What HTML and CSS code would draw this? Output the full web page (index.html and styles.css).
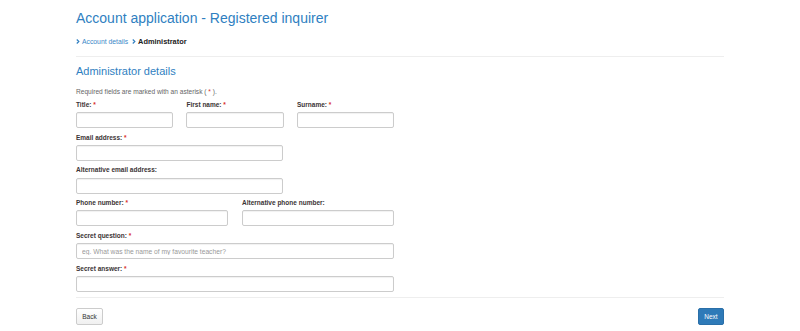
FILE: index.html
```html
<!DOCTYPE html>
<html lang="en">
<head>
<meta charset="utf-8">
<title>Account application - Registered inquirer</title>
<link rel="stylesheet" href="styles.css">
</head>
<body>
<div class="page">
  <h1 class="title">Account application - Registered inquirer</h1>
  <nav class="crumbs">
    <svg class="chev" viewBox="0 0 6 8" width="4" height="5"><path d="M1 0.8 L4.4 4 L1 7.2" fill="none" stroke="#2f7fc1" stroke-width="1.8"/></svg>
    <a href="#" class="crumb-link">Account details</a>
    <svg class="chev dark" viewBox="0 0 6 8" width="4" height="5"><path d="M1 0.8 L4.4 4 L1 7.2" fill="none" stroke="#2f7fc1" stroke-width="1.8"/></svg>
    <strong class="crumb-current">Administrator</strong>
  </nav>
  <hr class="rule top">
  <h2 class="section">Administrator details</h2>
  <p class="note">Required fields are marked with an asterisk ( <span class="req">*</span> ).</p>
  <form class="form">
    <div class="row three">
      <div class="group">
        <label class="label">Title: <span class="req">*</span></label>
        <input class="input" type="text">
      </div>
      <div class="group">
        <label class="label">First name: <span class="req">*</span></label>
        <input class="input" type="text">
      </div>
      <div class="group">
        <label class="label">Surname: <span class="req">*</span></label>
        <input class="input" type="text">
      </div>
    </div>
    <div class="group email">
      <label class="label">Email address: <span class="req">*</span></label>
      <input class="input" type="text">
    </div>
    <div class="group email">
      <label class="label">Alternative email address:</label>
      <input class="input" type="text">
    </div>
    <div class="row two">
      <div class="group">
        <label class="label">Phone number: <span class="req">*</span></label>
        <input class="input" type="text">
      </div>
      <div class="group">
        <label class="label">Alternative phone number:</label>
        <input class="input" type="text">
      </div>
    </div>
    <div class="group">
      <label class="label">Secret question: <span class="req">*</span></label>
      <input class="input" type="text" placeholder="eg. What was the name of my favourite teacher?">
    </div>
    <div class="group">
      <label class="label">Secret answer: <span class="req">*</span></label>
      <input class="input" type="text">
    </div>
  </form>
  <hr class="rule bottom">
  <div class="actions">
    <button class="btn" type="button">Back</button>
    <button class="btn primary" type="button">Next</button>
  </div>
</div>
</body>
</html>
```
FILE: styles.css
```css
html, body {
  margin: 0;
  padding: 0;
  background: #fff;
}
body {
  font-family: "Liberation Sans", Arial, sans-serif;
  color: #333;
}
.page {
  width: 648px;
  margin-left: 76px;
  padding-top: 10px;
}
.title {
  margin: 0;
  font-size: 14px;
  line-height: 16px;
  font-weight: normal;
  color: #2f7fc1;
}
.crumbs {
  margin-top: 10.5px;
  height: 10px;
  line-height: 10px;
  display: flex;
  align-items: center;
  gap: 2px;
}
.chev {
  display: block;
  flex: none;
}
.chev.dark {
  margin-left: 2px;
}
.crumb-link {
  font-size: 6.8px;
  color: #3a88c8;
  text-decoration: none;
}
.crumb-current {
  font-size: 7.4px;
  color: #222;
  font-weight: bold;
}
.rule {
  border: 0;
  border-top: 1px solid #eee;
  height: 0;
  margin: 0;
}
.rule.top {
  margin-top: 9.5px;
}
.section {
  margin: 8.4px 0 0;
  font-size: 11px;
  line-height: 13px;
  font-weight: normal;
  color: #2f7fc1;
}
.note {
  margin: 10px 0 0;
  font-size: 6.6px;
  line-height: 8px;
  color: #666;
}
.req {
  color: #d9302c;
}
.form {
  margin-top: 4.35px;
  width: 318px;
}
.row {
  display: grid;
}
.row.three {
  grid-template-columns: repeat(3, 97.3px);
  column-gap: 13.2px;
}
.row.two {
  grid-template-columns: 152px 152px;
  column-gap: 14px;
}
.group {
  margin-bottom: 5.4px;
}
.group.email {
  width: 207px;
}
.label {
  display: block;
  font-size: 6.5px;
  line-height: 8px;
  font-weight: bold;
  color: #3b3434;
  margin-bottom: 3.4px;
}
.input {
  display: block;
  box-sizing: border-box;
  width: 100%;
  height: 16px;
  margin: 0;
  padding: 0 5px;
  border: 1px solid #ccc;
  border-radius: 2px;
  box-shadow: inset 0 1px 1px rgba(0,0,0,0.06);
  font-family: "Liberation Sans", Arial, sans-serif;
  font-size: 6.7px;
  color: #555;
  background: #fff;
}
.input::placeholder {
  color: #999;
}
.rule.bottom {
  margin-top: 4.5px;
}
.actions {
  margin-top: 9.5px;
  display: flex;
  justify-content: space-between;
}
.btn {
  box-sizing: border-box;
  height: 17px;
  width: 27px;
  padding: 0;
  border: 1px solid #ccc;
  border-radius: 2px;
  background: linear-gradient(#fff, #f0f0f0);
  font-family: "Liberation Sans", Arial, sans-serif;
  font-size: 6.5px;
  color: #333;
}
.btn.primary {
  width: 26px;
  background: #2e7ab8;
  border-color: #2a6fa8;
  color: #fff;
}
```
